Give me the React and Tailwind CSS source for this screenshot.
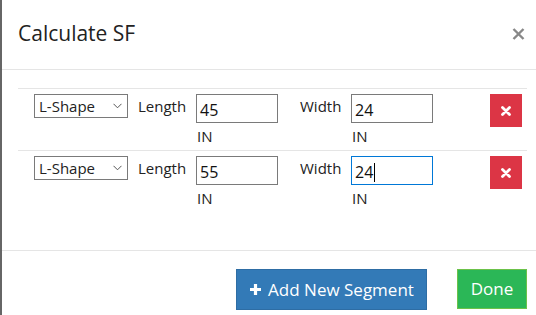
import React from "react";

const font = { fontFamily: '"Open Sans", "Noto Sans", sans-serif' };

function Chevron() {
  return (
    <svg width="9" height="6" viewBox="0 0 9 6" className="text-[#555]">
      <path d="M0.5 0.8 L4.5 4.8 L8.5 0.8" fill="none" stroke="currentColor" strokeWidth="1" />
    </svg>
  );
}

function Field({ label, value, focused, labelWidth }) {
  return (
    <div className="flex items-start">
      <div className={`${labelWidth} pt-[1px] text-[15px] text-[#222]`}>{label}</div>
      <div className="flex flex-col">
        <div
          className={`flex h-[29px] w-[82px] items-center border px-[3px] pt-[3px] text-[16px] text-[#111] ${
            focused ? "border-[#0078d7]" : "border-[#7a7a7a]"
          }`}
        >
          {value}
          {focused && <span className="ml-[1px] h-[19px] w-[1px] bg-black" />}
        </div>
        <div className="mt-[4px] pl-[1px] text-[15px] leading-[18px] text-[#222]">IN</div>
      </div>
    </div>
  );
}

function SegmentRow({ length, width, focused }) {
  return (
    <div className="flex items-start border-t border-[#e5e5e5] pt-[5px] pb-[5px] pl-[16px]">
      <div className="mr-[10px] flex h-[24px] w-[94px] items-center justify-between border border-[#7a7a7a] pl-[4px] pr-[5px] text-[15px] text-[#222]">
        <span>L-Shape</span>
        <Chevron />
      </div>
      <Field label="Length" labelWidth="w-[58px]" value={length} />
      <div className="w-[22px]" />
      <Field label="Width" labelWidth="w-[51px]" value={width} focused={focused} />
      <div className="flex-1" />
      <button className="mr-[5px] flex h-[33px] w-[32px] items-center justify-center bg-[#dc3545]">
        <svg width="10" height="10" viewBox="0 0 10 10">
          <path d="M1.5 1.5 L8.5 8.5 M8.5 1.5 L1.5 8.5" stroke="white" strokeWidth="2.8" strokeLinecap="round" />
        </svg>
      </button>
    </div>
  );
}

export default function App() {
  return (
    <div className="h-[315px] w-[536px] overflow-hidden border-l-2 border-[#666] bg-white" style={font}>
      {/* Header */}
      <div className="flex h-[70px] items-center justify-between border-b border-[#e5e5e5] pl-[16px] pr-[11px]">
        <h1 className="pb-[2px] text-[21px] text-[#222]">Calculate SF</h1>
        <svg width="13" height="12" viewBox="0 0 13 12" className="mb-[2px]">
          <path d="M1.5 1 L11.5 11 M11.5 1 L1.5 11" stroke="#888" strokeWidth="2.4" />
        </svg>
      </div>

      {/* Body */}
      <div className="h-[180px] pt-[18px] pr-[9px] pl-[16px]">
        <SegmentRow length="45" width="24" />
        <SegmentRow length="55" width="24" focused />
      </div>

      {/* Footer */}
      <div className="flex items-start justify-end gap-[30px] border-t border-[#e5e5e5] pt-[18px] pr-[9px]">
        <button className="flex h-[41px] w-[191px] items-center justify-center gap-[6px] border border-[#2e6da4] bg-[#337ab7] text-[17px] text-white">
          <svg width="13" height="13" viewBox="0 0 13 13">
            <path d="M6.5 1 V12 M1 6.5 H12" stroke="white" strokeWidth="3.2" />
          </svg>
          Add New Segment
        </button>
        <button className="flex h-[40px] w-[70px] items-center justify-center border border-[#6cc24a] bg-[#2bb757] text-[17px] text-white">
          Done
        </button>
      </div>
    </div>
  );
}
